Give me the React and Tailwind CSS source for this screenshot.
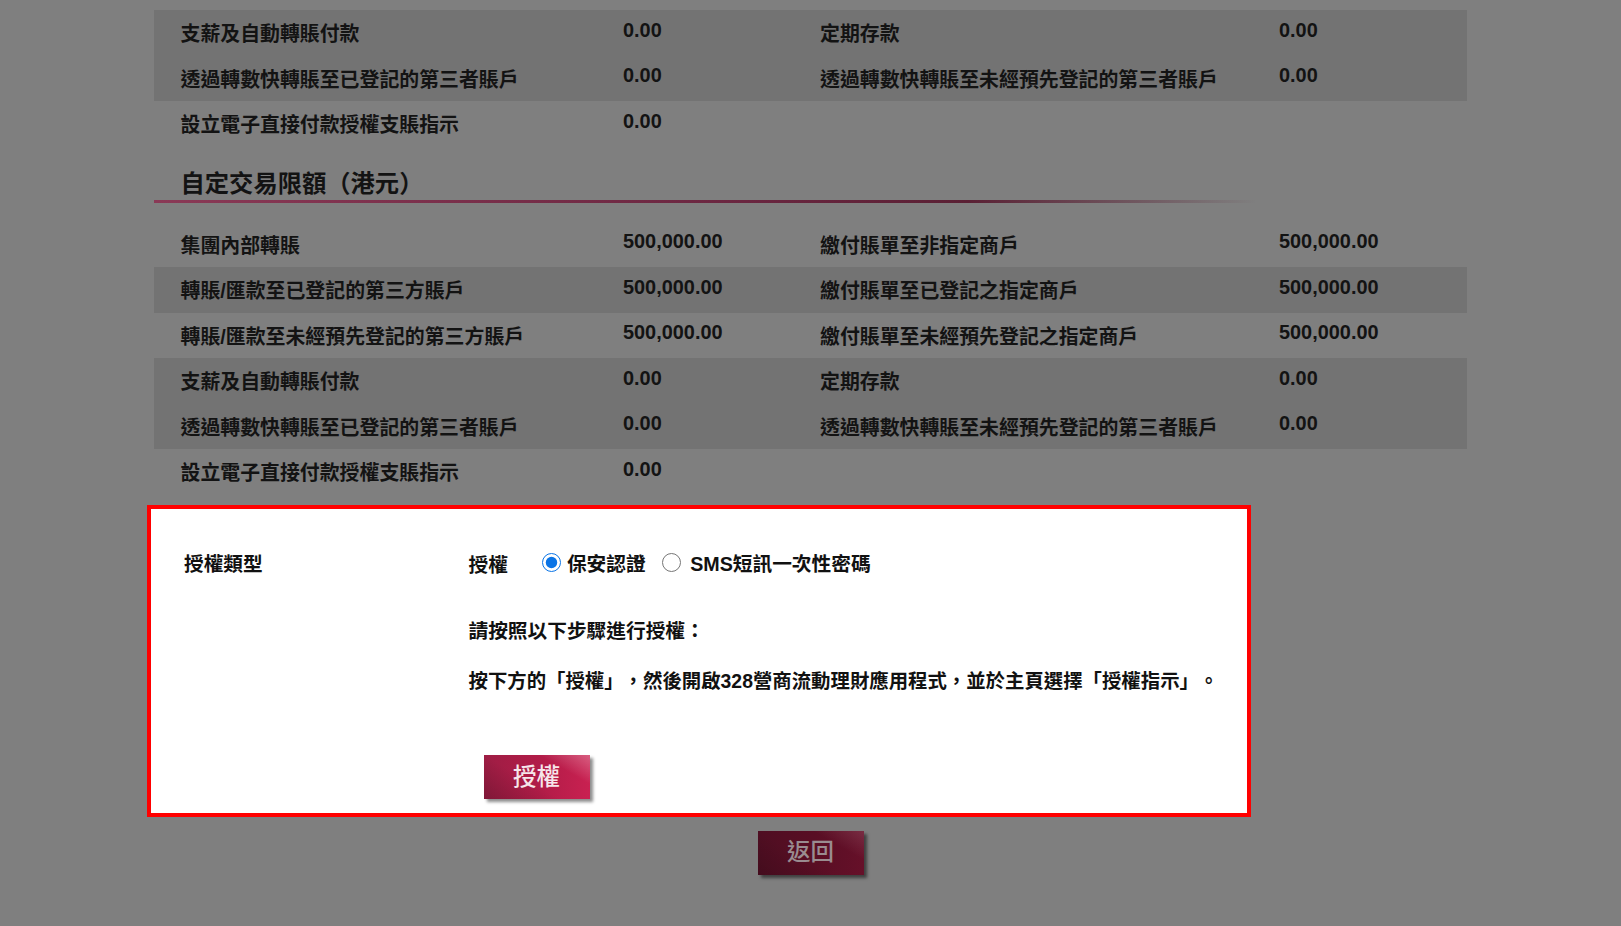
import { useState } from 'react';

const basicLimits = [
  { left: '支薪及自動轉賬付款', leftValue: '0.00', right: '定期存款', rightValue: '0.00', shaded: true },
  { left: '透過轉數快轉賬至已登記的第三者賬戶', leftValue: '0.00', right: '透過轉數快轉賬至未經預先登記的第三者賬戶', rightValue: '0.00', shaded: true },
  { left: '設立電子直接付款授權支賬指示', leftValue: '0.00', right: '', rightValue: '', shaded: false },
];

const customLimits = [
  { left: '集團內部轉賬', leftValue: '500,000.00', right: '繳付賬單至非指定商戶', rightValue: '500,000.00', shaded: false },
  { left: '轉賬/匯款至已登記的第三方賬戶', leftValue: '500,000.00', right: '繳付賬單至已登記之指定商戶', rightValue: '500,000.00', shaded: true },
  { left: '轉賬/匯款至未經預先登記的第三方賬戶', leftValue: '500,000.00', right: '繳付賬單至未經預先登記之指定商戶', rightValue: '500,000.00', shaded: false },
  { left: '支薪及自動轉賬付款', leftValue: '0.00', right: '定期存款', rightValue: '0.00', shaded: true },
  { left: '透過轉數快轉賬至已登記的第三者賬戶', leftValue: '0.00', right: '透過轉數快轉賬至未經預先登記的第三者賬戶', rightValue: '0.00', shaded: true },
  { left: '設立電子直接付款授權支賬指示', leftValue: '0.00', right: '', rightValue: '', shaded: false },
];

function LimitRow({ row }) {
  return (
    <div className={`grid grid-cols-[469px_197px_459px_188px] h-[45.5px] leading-[24px] text-[19.9px] ${row.shaded ? 'bg-[#737373]' : ''}`}>
      <div className="pl-[26.5px] pt-[12px]">{row.left}</div>
      <div className="pt-[7.5px]">{row.leftValue}</div>
      <div className="pt-[12px]">{row.right}</div>
      <div className="pt-[7.5px]">{row.rightValue}</div>
    </div>
  );
}

export default function App() {
  const [authType, setAuthType] = useState('token');

  return (
    <div className="w-full h-[926px] overflow-hidden bg-[#7f7f7f] font-['Liberation_Sans','Noto_Sans_CJK_TC',sans-serif] font-bold text-[19.7px] text-[#131313] [text-spacing-trim:space-all]">
      <div className="w-[1313px] mx-auto pt-[10px]">
        {/* rest of the standard limits table (scrolled) */}
        {basicLimits.map((row, i) => (
          <LimitRow key={i} row={row} />
        ))}

        {/* Custom limits heading */}
        <div className="h-[75px]">
          <h2 className="pl-[26.5px] pt-[22.5px] text-[24.3px] leading-[30px] font-bold">自定交易限額（港元）</h2>
          <div className="mt-[1px] h-[3px] bg-[linear-gradient(90deg,#8a3956_0%,#6a2640_45%,#5a2034_62%,rgba(90,32,52,0)_84%)]"></div>
        </div>

        {customLimits.map((row, i) => (
          <LimitRow key={i} row={row} />
        ))}
      </div>

      {/* Authorisation box */}
      <div className="ml-[147px] mt-[10.5px] w-[1104px] border-4 border-[#ff0000] bg-white text-[#111] flex">
        <div className="w-[317.5px] pl-[33px] pt-[43px] leading-[24px]">授權類型</div>

        <div className="flex-1 pt-[43px] pb-[14px] leading-[24px]">
          <div className="flex items-center h-[24px]">
            <span className="mt-[2px]">授權</span>
            <input
              type="radio"
              name="authType"
              checked={authType === 'token'}
              onChange={() => setAuthType('token')}
              className="m-0 ml-[34px] mb-[4px] w-[19px] h-[19px] accent-[#0a74e6]"
            />
            <span className="ml-[6px]">保安認證</span>
            <input
              type="radio"
              name="authType"
              checked={authType === 'sms'}
              onChange={() => setAuthType('sms')}
              className="m-0 ml-[16px] mb-[4px] w-[19px] h-[19px] accent-[#0a74e6]"
            />
            <span className="ml-[9.5px]">SMS短訊一次性密碼</span>
          </div>

          <p className="mt-[42.5px]">請按照以下步驟進行授權：</p>
          <p className="mt-[26.5px] text-[19.4px]">按下方的「授權」，然後開啟328營商流動理財應用程式，並於主頁選擇「授權指示」。</p>

          <button className="mt-[62px] ml-[15px] w-[106px] h-[44px] flex items-center justify-center text-[23.5px] font-medium text-[#f6e6ea] shadow-[3px_3px_3px_rgba(0,0,0,0.45)] bg-[linear-gradient(210deg,rgba(255,255,255,0.28)_0%,rgba(255,255,255,0)_28%),linear-gradient(30deg,rgba(0,0,0,0.2)_0%,rgba(0,0,0,0)_42%),linear-gradient(90deg,#9e1d44_0%,#b21c48_55%,#c92151_100%)]">
            授權
          </button>
        </div>
      </div>

      {/* Back button (under the overlay) */}
      <button className="mx-auto mt-[14px] w-[106px] h-[44px] flex items-center justify-center text-[23.5px] font-medium text-[#9a8c90] shadow-[3px_3px_3px_rgba(0,0,0,0.5)] bg-[linear-gradient(210deg,rgba(255,255,255,0.12)_0%,rgba(255,255,255,0)_28%),linear-gradient(30deg,rgba(0,0,0,0.15)_0%,rgba(0,0,0,0)_42%),linear-gradient(90deg,#4f0e22_0%,#590e24_55%,#661029_100%)]">
        返回
      </button>
    </div>
  );
}
